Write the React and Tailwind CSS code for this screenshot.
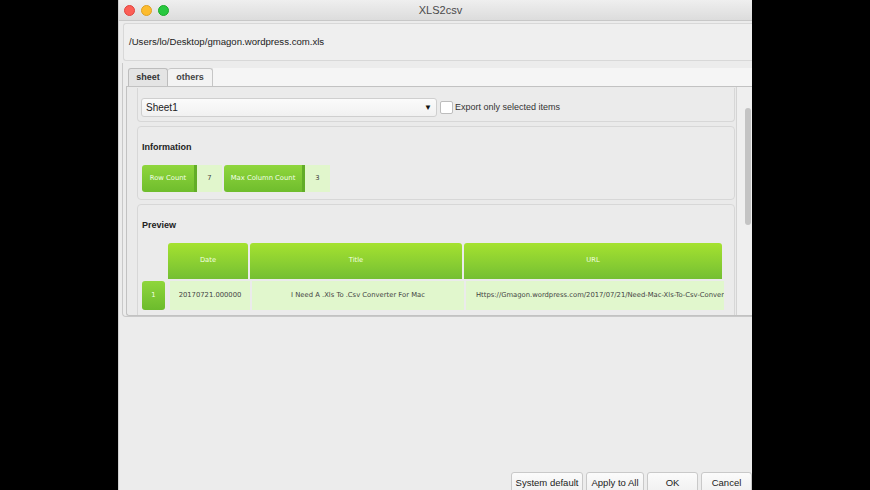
import React from "react";

const mac = { fontFamily: '"Liberation Sans", Arial, sans-serif' };
const dv = { fontFamily: '"DejaVu Sans", Verdana, sans-serif' };

function GreenLabel({ text, w }) {
  return (
    <div
      className={`${w} h-[27px] flex items-center justify-center rounded-l-[3px] border-r-[3px] border-[#62ad27] bg-gradient-to-b from-[#8fd63c] to-[#6fbd2d] text-[6.8px] text-[#f4ffe8]`}
      style={dv}
    >
      {text}
    </div>
  );
}

function ValueBox({ text }) {
  return (
    <div
      className="w-[25px] h-[27px] flex items-center justify-center bg-[#e1f6cc] text-[6.8px] text-[#444]"
      style={dv}
    >
      {text}
    </div>
  );
}

function HeaderCell({ text, w }) {
  return (
    <div
      className={`${w} h-[36px] shrink-0 flex items-center justify-center rounded-t-[3px] bg-gradient-to-b from-[#a5e22f] to-[#74bf33] text-[6.8px] text-[#f2ffe0]`}
      style={dv}
    >
      {text}
    </div>
  );
}

function BodyCell({ text, w, align = "justify-center" }) {
  return (
    <div
      className={`${w} h-[29px] shrink-0 flex items-center ${align} bg-[#e1f7cd] text-[6.8px] text-[#444] whitespace-nowrap overflow-hidden`}
      style={dv}
    >
      {text}
    </div>
  );
}

function Btn({ text, w }) {
  return (
    <div
      className={`${w} h-[22px] shrink-0 flex items-start justify-center pt-[3px] rounded-[3px] border border-[#c9c9c9] bg-gradient-to-b from-[#fbfbfb] to-[#f0f0f0] text-[9.5px] text-[#222] whitespace-nowrap`}
      style={mac}
    >
      {text}
    </div>
  );
}

export default function App() {
  return (
    <div className="w-[870px] h-[490px] bg-black flex overflow-hidden">
      <div className="ml-[118px] w-[634px] h-[490px] flex flex-col bg-[#ececec] border-l border-[#cfcfcf] overflow-hidden">
        {/* title bar */}
        <div className="h-[21px] shrink-0 flex items-center bg-gradient-to-b from-[#efefef] to-[#dcdcdc] border-b border-[#c8c8c8]">
          <div className="flex gap-[6px] pl-[5px]">
            <span className="w-[11px] h-[11px] rounded-full bg-[#fc5f57] border border-[#e0443e]" />
            <span className="w-[11px] h-[11px] rounded-full bg-[#fdbc2e] border border-[#dea123]" />
            <span className="w-[11px] h-[11px] rounded-full bg-[#28c840] border border-[#1aab29]" />
          </div>
          <div className="flex-1 text-center pr-[40px] text-[11px] text-[#4a4a4a]" style={mac}>
            XLS2csv
          </div>
        </div>

        {/* path */}
        <div className="ml-[4px] mt-[2px] h-[38px] shrink-0 flex items-center pl-[5px] rounded-l-[3px] border border-r-0 border-[#d8d8d8] bg-[#efefef] text-[9.6px] text-[#222]" style={mac}>
          /Users/lo/Desktop/gmagon.wordpress.com.xls
        </div>

        {/* tab pane */}
        <div className="ml-[3px] mt-[2px] h-[254px] shrink-0 flex flex-col rounded-bl-[4px] border-l border-b border-[#c9c9c9]">
          <div className="h-[23px] shrink-0 flex items-end pl-[5px]">
            <div className="w-[40px] h-[18px] flex items-center justify-center rounded-t-[3px] border border-b-0 border-[#bdbdbd] bg-[#e4e4e4] text-[9px] font-semibold text-[#333]" style={mac}>
              sheet
            </div>
            <div className="w-[45px] h-[18px] flex items-center justify-center rounded-t-[3px] border border-l-0 border-b-0 border-[#c6c6c6] bg-[#f3f3f3] text-[9px] font-semibold text-[#444]" style={mac}>
              others
            </div>
            <div className="flex-1 h-[18px] bg-[#f5f5f5]" />
          </div>
          <div className="flex-1 flex ml-[3px] border-t border-l border-b border-[#c2c2c2] bg-[#eaeaea] overflow-hidden rounded-bl-[3px]">
            <div className="flex-1 flex flex-col gap-[4px] pl-[10px] overflow-hidden">
              {/* sheet box */}
              <div className="h-[34px] shrink-0 flex items-center pt-[6px] pl-[3px] mt-[1px] rounded-b-[4px] border border-t-0 border-[#d7d7d7] bg-[#ebebeb]">
                <div className="w-[296px] h-[19px] flex items-center justify-between px-[4px] rounded-[3px] border border-[#cfcfcf] bg-gradient-to-b from-[#fbfbfb] to-[#f1f1f1] text-[10px] text-[#222]" style={mac}>
                  <span>Sheet1</span>
                  <span className="text-[8px] text-[#111]">▼</span>
                </div>
                <div className="ml-[3px] w-[13px] h-[13px] rounded-[2px] border border-[#bdbdbd] bg-white" />
                <span className="ml-[2px] text-[9px] text-[#333]" style={mac}>
                  Export only selected items
                </span>
              </div>

              {/* information */}
              <div className="h-[74px] shrink-0 flex flex-col pl-[4px] rounded-[4px] border border-[#d7d7d7] bg-[#ebebeb]">
                <div className="mt-[14px] text-[9px] font-bold text-[#222]" style={mac}>
                  Information
                </div>
                <div className="mt-[10px] flex items-center">
                  <GreenLabel text="Row Count" w="w-[55px]" />
                  <ValueBox text="7" />
                  <div className="w-[2px]" />
                  <GreenLabel text="Max Column Count" w="w-[81px]" />
                  <ValueBox text="3" />
                </div>
              </div>

              {/* preview */}
              <div className="h-[130px] shrink-0 flex flex-col pl-[4px] rounded-[4px] border border-[#d7d7d7] bg-[#ebebeb] overflow-hidden">
                <div className="mt-[14px] text-[9px] font-bold text-[#222]" style={mac}>
                  Preview
                </div>
                <div className="mt-[10px] flex gap-[2px]">
                  <div className="w-[24px] shrink-0" />
                  <HeaderCell text="Date" w="w-[80px]" />
                  <HeaderCell text="Title" w="w-[212px]" />
                  <HeaderCell text="URL" w="w-[258px]" />
                </div>
                <div className="mt-[2px] flex gap-[2px]">
                  <div className="w-[23px] h-[29px] shrink-0 flex items-center justify-center rounded-[3px] bg-gradient-to-b from-[#8fd63c] to-[#6cbb2d] text-[6.8px] text-[#f2ffe0]" style={dv}>
                    1
                  </div>
                  <div className="w-[1px]" />
                  <BodyCell text="20170721.000000" w="w-[80px]" />
                  <BodyCell text="I Need A .Xls To .Csv Converter For Mac" w="w-[212px]" />
                  <BodyCell text="Https://Gmagon.wordpress.com/2017/07/21/Need-Mac-Xls-To-Csv-Converter" w="w-[258px]" align="justify-start pl-[10px]" />
                </div>
              </div>
            </div>

            {/* scrollbar */}
            <div className="w-[16px] shrink-0 ml-[1px] border-l border-[#d4d4d4] bg-[#efefef] flex justify-end pr-[1px]">
              <div className="mt-[21px] w-[6px] h-[117px] rounded-[3px] bg-[#c4c4c4]" />
            </div>
          </div>
        </div>

        <div className="flex-1" />

        {/* buttons */}
        <div className="h-[18px] shrink-0 flex justify-end items-start gap-[3px] overflow-hidden">
          <Btn text="System default" w="w-[72px]" />
          <Btn text="Apply to All" w="w-[58px]" />
          <Btn text="OK" w="w-[51px]" />
          <Btn text="Cancel" w="w-[51px]" />
        </div>
      </div>
    </div>
  );
}
